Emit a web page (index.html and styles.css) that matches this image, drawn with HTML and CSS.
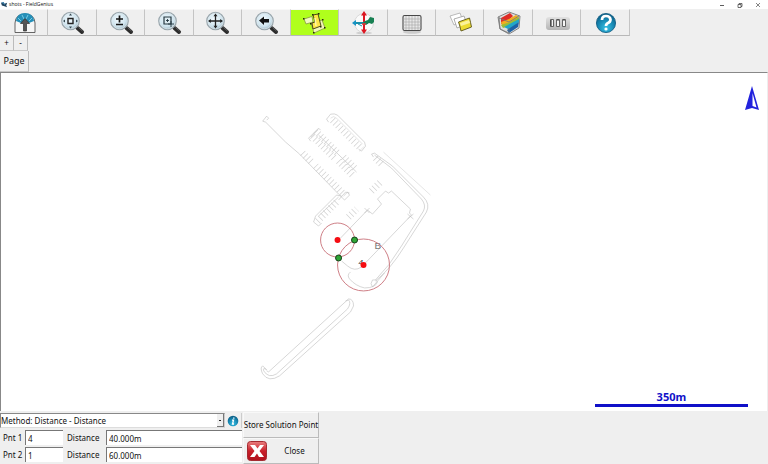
FILE: index.html
```html
<!DOCTYPE html>
<html lang="en">
<head>
<meta charset="utf-8">
<title>shots - FieldGenius</title>
<link rel="stylesheet" href="styles.css">
</head>
<body>
<svg class="defs" aria-hidden="true">
  <defs>
    <radialGradient id="lens" cx="45%" cy="40%" r="60%">
      <stop offset="0" stop-color="#f4fbff"/><stop offset=".7" stop-color="#cfe4ee"/><stop offset="1" stop-color="#9fb9c6"/>
    </radialGradient>
    <radialGradient id="blue" cx="50%" cy="75%" r="75%">
      <stop offset="0" stop-color="#38c0e4"/><stop offset=".6" stop-color="#1583ae"/><stop offset="1" stop-color="#0a587f"/>
    </radialGradient>
    <linearGradient id="red" x1="0" y1="0" x2="0" y2="1">
      <stop offset="0" stop-color="#e98080"/><stop offset=".5" stop-color="#c9202a"/><stop offset="1" stop-color="#b0101c"/>
    </linearGradient>
    <linearGradient id="grey" x1="0" y1="0" x2="0" y2="1">
      <stop offset="0" stop-color="#e2e2e2"/><stop offset="1" stop-color="#b4b4b4"/>
    </linearGradient>
    <symbol id="glass" viewBox="0 0 24 24">
      <path d="M15 15l2.500 2.500" stroke="#999" stroke-width="2"/>
      <path d="M16.500 17l4.500 4" stroke="#2c2c2c" stroke-width="4" stroke-linecap="round"/>
      <path d="M17.500 16.500l4 3.500" stroke="#777" stroke-width=".7"/>
      <circle cx="9.500" cy="10" r="8.600" fill="url(#lens)" stroke="#98a5ac" stroke-width="1.500"/>
      <circle cx="9.500" cy="10" r="7.800" fill="none" stroke="#eef7fa" stroke-width=".6"/>
    </symbol>
  </defs>
</svg>

<header class="titlebar">
  <svg class="app-icon" viewBox="0 0 8 8"><path d="M0 2l3-1 1 2 3-1-1 3 1 2-3-1-3-1z" fill="#20435e"/><path d="M1 2l2 0 1 2" stroke="#55a6d6" fill="none"/></svg>
  <span class="title">shots - FieldGenius</span>
  <div class="window-buttons">
    <button aria-label="Minimize"><svg viewBox="0 0 6 6"><path d="M1 3.500h4" stroke="#333" stroke-width=".8"/></svg></button>
    <button aria-label="Restore"><svg viewBox="0 0 6 6"><path d="M1 2.500h3v3H1zM2 2.500v-1h3v3H4" fill="none" stroke="#333" stroke-width=".7"/></svg></button>
    <button aria-label="Close window"><svg viewBox="0 0 6 6"><path d="M1 1l4 4M5 1L1 5" stroke="#333" stroke-width=".6"/></svg></button>
  </div>
</header>

<nav class="toolbar">
  <button aria-label="Main menu"><svg viewBox="0 0 24 24">
    <path d="M2 21.500V12Q2.500 3 12 3t10 9v9.500z" fill="#f6f6f6" stroke="#555" stroke-width=".9"/>
    <path d="M3 10Q4 2 12 2t9 8l-5 2q-4-4-8 0z" fill="#248fb8"/><path d="M5 7l3 3M9 4l2 4M15 4l-2 4M19 7l-3 3" stroke="#78cce5" stroke-width="1"/>
    <path d="M12 7.500l4.500 5h-3V20h-3v-7.500h-3z" fill="#555" stroke="#303030" stroke-width=".7"/></svg></button>
  <button aria-label="Zoom extents"><svg viewBox="0 0 24 24"><use href="#glass"/><path d="M7 7.500h5v5H7z" fill="#e9f4fa" stroke="#222" stroke-width="1.400"/><path d="M9.500 2.500l1.500 2H8zM9.500 17.500l1.500-2H8zM2 10l2-1.500v3zM17 10l-2-1.500v3z" fill="#35464e"/></svg></button>
  <button aria-label="Zoom in or out"><svg viewBox="0 0 24 24"><use href="#glass"/><path d="M9.500 4.500v7M6 8h7M6 13.500h7" fill="none" stroke="#151515" stroke-width="1.700"/></svg></button>
  <button aria-label="Zoom window"><svg viewBox="0 0 24 24"><use href="#glass"/><path d="M6 6h7v7H6z" fill="#dceaf0" stroke="#253841" stroke-width="1.200"/><path d="M8 9.500h3M9.500 8v3M13 10v6M10 13h6" stroke="#253841" stroke-width=".9"/></svg></button>
  <button aria-label="Pan"><svg viewBox="0 0 24 24"><use href="#glass"/><path d="M9.500 4v12M3.500 10h12" stroke="#222" stroke-width="1.300"/><path d="M9.500 2.500l2 2.800h-4zM9.500 17.500l2-2.800h-4zM2 10l2.800-2v4zM17 10l-2.800-2v4z" fill="#222"/></svg></button>
  <button aria-label="Zoom previous"><svg viewBox="0 0 24 24"><use href="#glass"/><path d="M4 9.500L9 5.500V8h5v3.500H9V14z" fill="#111"/></svg></button>
  <button class="active" aria-label="Intersection"><svg viewBox="0 0 24 24">
    <path d="M1 8l8-2.500 1 5.500-7 2z" fill="#f0fac0" stroke="#7c8b3c" stroke-width=".7"/>
    <path d="M8 12l11-3 3 8-11 5z" fill="#f1f6b8" stroke="#7c8b3c" stroke-width=".7"/>
    <path d="M10 4l5-1 3 12-8 3-1-6 3-1z" fill="#ffe648" stroke="#3b3a10" stroke-width=".9"/>
    <path d="M12 7l1 8" stroke="#fff6a8" stroke-width="1.500"/>
    <path d="M0 7h1.500v1.500H0zM9 3h1.500v1.500H9zM15 2h1.500v1.500H15zM17 15h1.500v1.500H17zM21 16h1.500v1.500H21zM10 21h1.500v1.500H10zM7 12h1.500v1.500H7zM19 8h1.500v1.500H19z" fill="#252b0c"/></svg></button>
  <button aria-label="Coordinate geometry"><svg viewBox="0 0 24 24">
    <ellipse cx="12" cy="22" rx="8" ry="1.500" fill="#cfcfcf"/><circle cx="12" cy="12" r="9.500" fill="#fafafa" stroke="#ccc" stroke-width=".7"/>
    <path d="M11 4h2v15h-2z" fill="#dd1722"/><path d="M12 0l3 4.500H9zM12 23l3-4.500H9z" fill="#dc1722"/>
    <path d="M4 11h12v2H4z" fill="#188fa9"/><path d="M0 12l4-3v6z" fill="#1693c4"/><path d="M13 10l3-1 2-3 4 1v4l-2 2-3-1-3 2-3-2z" fill="#188053"/><path d="M6 13l4 2" stroke="#188fa9"/><path d="M10 13h4" stroke="#e53535" stroke-width="1.500"/></svg></button>
  <button aria-label="Grid"><svg viewBox="0 0 24 24">
    <ellipse cx="12" cy="21" rx="9" ry="1.800" fill="#ccc"/><rect x="3" y="4.500" width="18" height="15" rx="1.500" fill="#e8e8e8" stroke="#484848" stroke-width="1.100"/>
    <path d="M6 5v14M9 5v14M12 5v14M15 5v14M18 5v14M3 8h18M3 11h18M3 14h18M3 17h18" stroke="#a2a2a2" stroke-width=".6"/></svg></button>
  <button aria-label="Layers"><svg viewBox="0 0 24 24">
    <path d="M1 5l10-3 3 8-9 4z" fill="#fff" stroke="#aaa" stroke-width=".8"/><path d="M5 8l10-3 3 8-10 4z" fill="#fff" stroke="#999" stroke-width=".8"/>
    <path d="M9.500 11l11-4q1 4 2 9l-10.500 4q-1-5-2.500-9z" fill="#ecdc32" stroke="#5b5419" stroke-width=".9"/><path d="M11 12l9-3 1 3-9 3z" fill="#fbf39c"/></svg></button>
  <button aria-label="Surface"><svg viewBox="0 0 24 24">
    <path d="M1 6l11-5 11 4-1 12-10 6-9-5z" fill="#dedede" stroke="#777" stroke-width=".9"/>
    <path d="M4 7l9-5 3 3-4 4-8 4z" fill="#df2b25"/><path d="M4 11l8-3 7-4 3 2-8 6-9 3z" fill="#f2ad20"/><path d="M4 14l9-3 9-5v3l-8 5-8 3z" fill="#98bd38"/><path d="M7 16l15-8v3l-9 8z" fill="#21a6c8"/><path d="M10 19l12-8-1 5-9 6z" fill="#1e61a5"/><path d="M2 6l1 12 9 4V17M2 7l10 4 10-6" fill="none" stroke="#777" stroke-width=".8"/></svg></button>
  <button aria-label="Settings"><svg viewBox="0 0 24 24">
    <rect x="0" y="6" width="24" height="13" rx="3" fill="url(#grey)"/><path d="M4.500 8.500h3v7h-3zM10.500 8.500h3v7h-3zM16.500 8.500h3v7h-3z" fill="#f6f6f6" stroke="#555" stroke-width=".9"/><path d="M5 9v6M11 9h2M17 9h2" stroke="#444" stroke-width="1.200"/></svg></button>
  <button aria-label="Help"><svg viewBox="0 0 24 24">
    <circle cx="12" cy="12" r="9.600" fill="url(#blue)" stroke="#0a587f" stroke-width=".8"/>
    <path d="M8 9q0-4 4-4t4.500 3.500q0 2.500-2.500 3.500-2 .8-2 3" fill="none" stroke="#fff" stroke-width="2.700"/><circle cx="12" cy="18" r="1.600" fill="#fff"/></svg></button>
</nav>

<section class="pager">
  <div class="steps"><button>+</button><button>-</button></div>
  <button class="page">Page</button>
</section>

<main class="map">
  <svg class="plan" viewBox="0 73 767 338" role="img" aria-label="Site plan">
    <g class="survey">
      <path d="M266 120l2-2-2-2-4 5 3 1 20 20 14 12 39 40 6 6 5-5-2-3-4 4"/>
      <path class="ticks" d="M302 153l10 10M315 166l27 27"/>
      <path d="M328 122l-2-3 4-5q4-1 7 1l27 27 1 4-4 5-3-2"/>
      <path class="faint" d="M330 118q3-3 6 0l26 26"/>
      <path class="ticks" d="M332 120l29 29"/>
      <path d="M310 141l-2-3 10-10 2 2M310 137l7-7M318 135l38 37"/>
      <path class="ticks" d="M315 131l22 22M312 136l22 22M343 157l13 13M338 161l14 14"/>
      <path d="M341 196l-5-1-21 21-2 6 5 4 3-3M318 216l20-19"/>
      <path class="ticks" d="M317 221l20-20M348 217l8-8M371 191l9-9M375 158l7 7"/>
      <path d="M349 193l-4-1-7 8"/>
      <path d="M373 157l-2-3 3-1 18 13 31 31q7 7 3 15l-23 36q-13 21-28 33"/>
      <path d="M374 155l17 13 30 31q5 6 2 12l-22 35q-12 20-26 34"/>
      <path d="M383 152l47 43" class="faint"/>
      <path d="M340 238l27-28 5 4 9-10-4-5 8-8 3 2 3-2 19 18-1 4 2 2-50 52q-7 5-14-1l-6-5"/>
      <path d="M364 208l5 5m0-5l-5 5M407 214l6 5m0-5l-6 5"/>
      <path d="M350 272q-4 3-1 7 6 7 15 9 11 0 13-6-1-3-5-2-3 4 0 7l12-14"/>
      <path d="M266 371l2 1 80-73q5 0 5 7l-3 6-71 64q-11 7-17-2-3-6 0-8l4 4"/>
      <path d="M266 370q-4-3-3 1 5 8 13 3l71-65q4-6 1-9l-3 1"/>
    </g>
    <text x="374" y="249" class="label-b">B</text>
    <text x="358" y="265" class="label-a">4</text>
    <g class="radius"><circle cx="337" cy="240" r="17"/><circle cx="363" cy="265" r="26"/></g>
    <g class="known"><circle cx="337" cy="240" r="3"/><circle cx="363" cy="265" r="3"/></g>
    <g class="solution"><circle cx="354" cy="240" r="3"/><circle cx="338" cy="258" r="3"/></g>
  </svg>
  <svg class="north" viewBox="0 0 16 26" role="img" aria-label="North"><path d="M8 1L1 25l7-2 7 2z" fill="#2222dd"/><path d="M8.500 8v13l4 1.500z" fill="#fff"/></svg>
  <div class="scale">350m</div>
</main>

<form class="panel">
  <div class="fields">
    <div class="method">
      <div class="combo"><select aria-label="Method"><option>Method: Distance - Distance</option></select></div>
      <button type="button" class="info" aria-label="Information"><svg viewBox="0 0 12 12"><circle cx="6" cy="6" r="5.300" fill="url(#blue)"/><path d="M6.800 2.500v1.300M5 5.200h1.500L5.500 9H7" fill="none" stroke="#fff" stroke-width="1.300"/></svg></button>
    </div>
    <div class="row">
      <label for="p1">Pnt 1</label><input id="p1" value="4">
      <label for="d1" class="distance">Distance</label><input id="d1" value="40.000m">
    </div>
    <div class="row">
      <label for="p2">Pnt 2</label><input id="p2" value="1">
      <label for="d2" class="distance">Distance</label><input id="d2" value="60.000m">
    </div>
  </div>
  <div class="actions">
    <button type="button">Store Solution Point</button>
    <button type="button" class="close"><svg viewBox="0 0 20 20"><rect x=".5" y=".5" width="19" height="19" rx="3" fill="url(#red)" stroke="#a52a31"/><path d="M3 4h5l2.500 3.500L13 4h4l-4.500 6 4.500 6h-5l-2-3.500L7.500 16H3l4.500-6z" fill="#fff"/></svg><span>Close</span></button>
  </div>
</form>
</body>
</html>
```
FILE: styles.css
```css
* { box-sizing: border-box; }
body {
  margin: 0;
  height: 100vh;
  display: flex;
  flex-direction: column;
  background: #efefef;
  color: #111;
  font: 8px/12px "Noto Sans", "Open Sans", sans-serif;
}
button, input, select {
  margin: 0;
  padding: 0;
  border: 0;
  border-radius: 0;
  background: none;
  color: inherit;
  font: inherit;
}
svg { display: block; }
.defs { position: absolute; width: 0; height: 0; }

.titlebar {
  display: flex;
  align-items: center;
  height: 9px;
  background: #fff;
  padding: 0 7px 0 1px;
  gap: 1px;
  font: 5px/9px "Open Sans", sans-serif;
}
.app-icon { width: 7px; height: 7px; }
.window-buttons { display: flex; margin-left: auto; gap: 12px; }
.window-buttons svg { width: 6px; height: 6px; }

.toolbar {
  display: grid;
  grid-template-columns: repeat(13, 1fr);
  width: 82%;
  height: 27px;
}
.toolbar button {
  display: grid;
  place-items: center;
  padding-left: 2px;
  border-right: 1px solid #c4c4c4;
  border-bottom: 1px solid #b8b8b8;
  border-top: 1px solid #f8f8f8;
}
.toolbar svg { width: 24px; height: 24px; }
.toolbar .active { background: #b0ff1c; }

.pager { display: flex; flex-direction: column; align-items: flex-start; height: 36px; }
.steps { display: flex; }
.steps button, .page { border-right: 1px solid #bbb; border-bottom: 1px solid #c8c8c8; }
.steps button { width: 14px; height: 15px; }
.page { width: 29px; height: 21px; font-size: 9px; }

.map {
  position: relative;
  flex: 1;
  min-height: 0;
  background: #fff;
  border: 1px solid #888;
  border-right-color: #eee;
  border-bottom: 0;
}
.plan { width: 100%; height: 100%; }
.survey { fill: none; stroke: #bcbcbc; stroke-width: .6; }
.survey .faint { stroke: #d4d4d4; }
.survey .ticks { stroke: #cfcfcf; stroke-width: 7; stroke-dasharray: .7 3; }
.radius { fill: none; stroke: #c87078; stroke-width: .9; }
.known { fill: #f50d12; }
.solution { fill: #2fa636; stroke: #143f18; stroke-width: 1; }
.label-b { font: 10px "Liberation Sans", sans-serif; fill: #777; }
.label-a { font: italic 8px "Liberation Sans", sans-serif; fill: #333; }
.north { position: absolute; right: 7px; top: 12px; width: 16px; height: 26px; }
.scale {
  position: absolute;
  right: 19px;
  bottom: 4px;
  width: 20%;
  border-bottom: 3px solid #1010c8;
  color: #1010c8;
  text-align: center;
  font: bold 11px/14px "Noto Sans", sans-serif;
}

.panel { display: flex; align-items: flex-start; gap: 1px; height: 53px; }
.fields { display: flex; flex-direction: column; gap: 2px; width: 242px; padding-top: 2px; }
.method { display: flex; height: 15px; }
.combo { position: relative; flex: 1; background: #fff; border: 1px solid #888; border-right-color: #ccc; border-bottom-color: #ddd; }
.combo select { display: block; appearance: none; width: 100%; height: 13px; line-height: 13px; }
.combo::after {
  content: "";
  position: absolute;
  right: 0;
  top: 0;
  width: 6px;
  height: 12px;
  background: linear-gradient(#222, #222) center / 2px 1px no-repeat #efefef;
  border-right: 1px solid #777;
  border-bottom: 1px solid #777;
  pointer-events: none;
}
.info { display: grid; place-items: center; width: 17px; border-right: 1px solid #ccc; }
.info svg { width: 12px; height: 12px; }
.row { display: grid; grid-template-columns: 22px 38px 43px 1fr; align-items: center; padding-left: 3px; }
.row input { width: 100%; height: 15px; background: #fff; border-top: 1px solid #777; border-left: 1px solid #777; padding-left: 2px; }
.row .distance { padding-left: 4px; }
.actions { width: 76px; padding-top: 1px; }
.actions button {
  display: flex;
  align-items: center;
  justify-content: center;
  width: 100%;
  height: 26px;
  border: 1px solid #f8f8f8;
  border-right-color: #bbb;
  border-bottom-color: #bbb;
  white-space: nowrap;
}
.actions .close { justify-content: flex-start; padding-left: 3px; }
.close svg { width: 20px; height: 20px; }
.close span { flex: 1; padding-left: 4px; }
```
